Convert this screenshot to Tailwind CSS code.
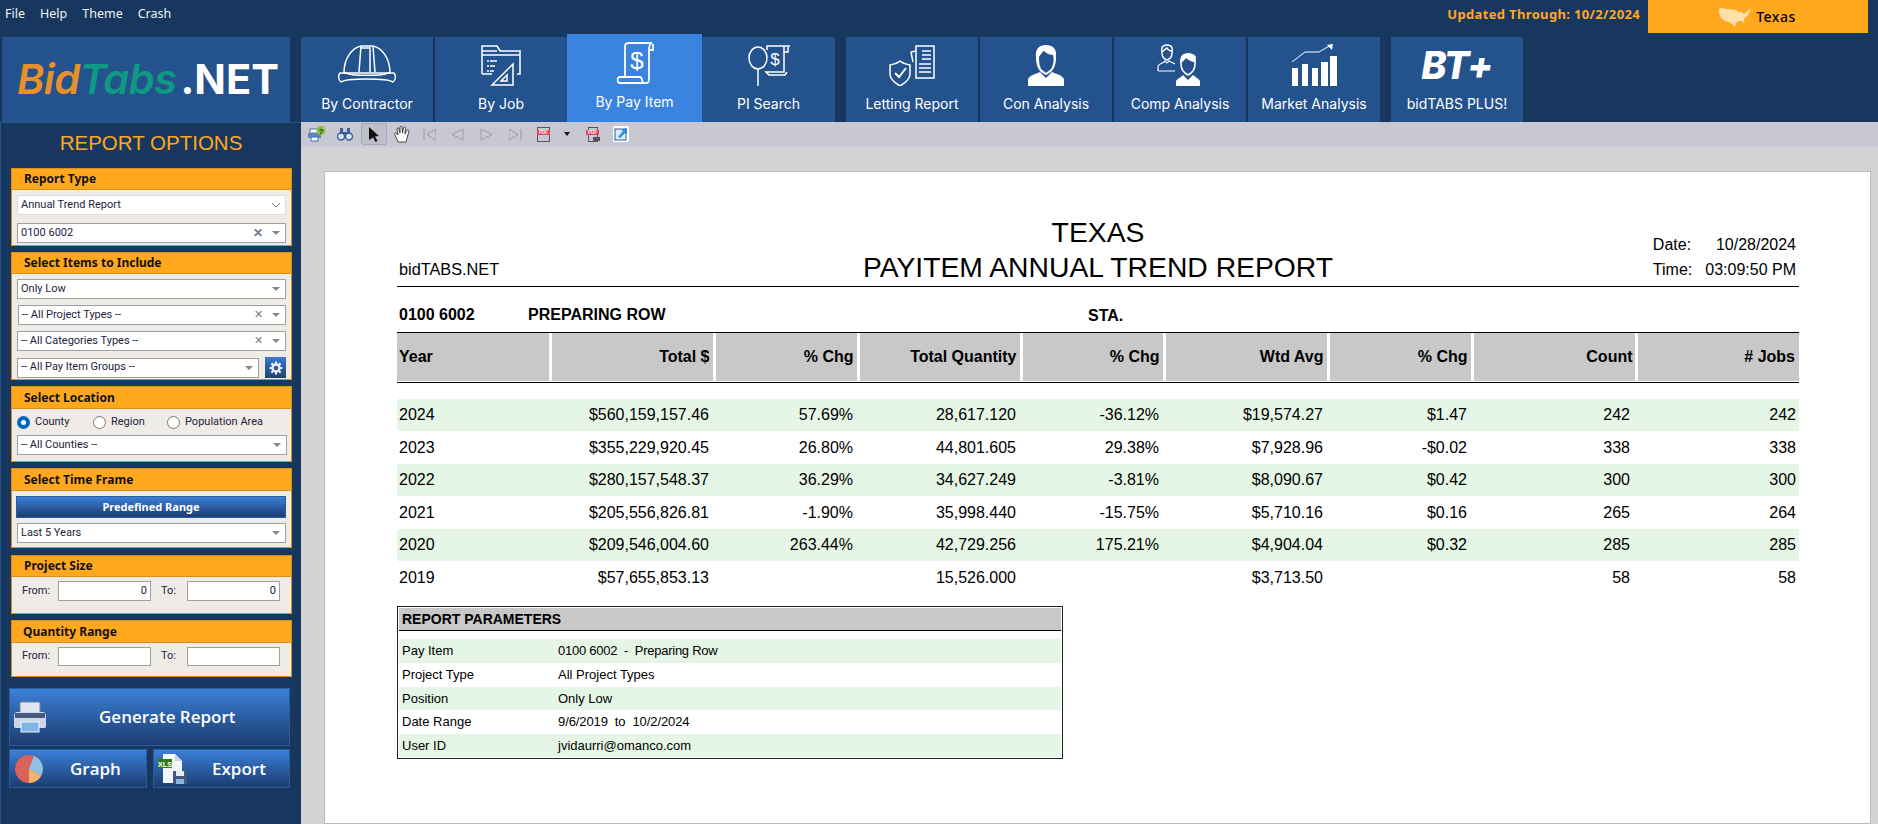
<!DOCTYPE html>
<html lang="en">
<head>
<meta charset="UTF-8">
<title>BidTabs.NET</title>
<script src="https://cdn.jsdelivr.net/npm/@tailwindcss/browser@4"></script>
</head>
<body class="h-screen overflow-hidden bg-[#17375e] font-['Noto_Sans',sans-serif]">

<!-- top menu -->
<div class="flex h-[34px] items-start text-white">
  <div class="flex gap-[15px] pl-[5px] pt-[5px] text-[12.500px] leading-[18px] text-[#f2f2f2]">
    <span>File</span><span>Help</span><span>Theme</span><span>Crash</span>
  </div>
  <div class="ml-auto pt-[5px] pr-[8px] text-[13px] leading-[18px] font-bold tracking-[0.35px] text-[#ffa81d]">Updated Through: 10/2/2024</div>
  <div class="mr-[10px] flex h-[33px] w-[220px] items-center justify-center gap-[5px] bg-[#ffa81d] pr-[1px]">
    <svg width="32" height="20" viewBox="0 0 32 20"><path d="M0 3 L1 1 L8 2 L17 3 L20 5 L23 5 L25 7 L30 3 L32 0 L31 5 L28 9 L25 12 L25.500 18 L23.500 14 L20 14 L17 16 L16 20 L13 17 L10 15 L6 14 L2 11 L0.500 7 Z" fill="#ffdfa8"/></svg>
    <span class="text-[14px] font-medium tracking-[0.5px] text-black">Texas</span>
  </div>
</div>

<!-- nav tiles -->
<div class="flex h-[88px] items-end pl-[2px] font-['Inter',sans-serif] text-[14px] text-white">
  <div class="flex h-[85px] w-[288px] items-center bg-[#23528d] pl-[15px]">
    <span class="text-[41.500px] leading-none font-semibold italic tracking-[-0.5px] text-[#e8912a]">Bid</span><span class="text-[41.500px] leading-none font-semibold italic tracking-[-0.5px] text-[#0e9a80]">Tabs</span>
    <span class="ml-[4px] text-[41.500px] leading-none font-bold text-white">.NET</span>
  </div>
  <div class="ml-[11px] flex h-[85px] w-[132px] flex-col items-center bg-[#23528d] pt-[7px]">
    <svg width="60" height="40" viewBox="0 0 60 40" fill="none" stroke="white" stroke-width="1.500"><path d="M7 29 C7 14 15 4 24 2 L36 2 C45 4 53 14 53 29"/><path d="M24 2 L22 28 M36 2 L38 28 M24 4 L33 4 L33 28 M7 29 L53 29"/><path d="M3 29 L10 29 C12 32 48 32 50 29 L57 29 C59 31 59 36 56 38 C50 34 10 34 4 38 C1 36 1 31 3 29 Z"/></svg>
    <span class="mt-[11px] leading-[18px]">By Contractor</span>
  </div>
  <div class="ml-[2px] flex h-[85px] w-[132px] flex-col items-center bg-[#23528d] pt-[7px]">
    <svg width="42" height="42" viewBox="0 0 42 42" fill="none" stroke="white" stroke-width="1.500"><path d="M2 30 L2 2 L17 2 L20 7 L40 7 L40 30 L37 30 M2 7 L17 7 M2 11 L40 11 M2 30 L12 30"/><path d="M7 17 L17 17 M7 22 L15 22 M7 27 L14 27" stroke-dasharray="2 1 8"/><path d="M33 20 L33 41 L12 41 Z M27 31 L27 37 L21 37 Z"/></svg>
    <span class="mt-[9px] leading-[18px]">By Job</span>
  </div>
  <div class="flex h-[88px] w-[135px] flex-col items-center bg-[#3a84e0] pt-[8px]">
    <svg width="38" height="42" viewBox="0 0 38 42" fill="none" stroke="white" stroke-width="1.800"><path d="M9 34 L9 4 C9 1 12 1 13 1 L36 1 C33 2 33 6 33 8 L33 38 C33 42 29 41 27 41 L4 41 C1 41 1 36 3 35 L24 35 C26 35 26 38 27 41 M33 8 L37 8 L37 2"/><text x="21" y="27" text-anchor="middle" font-family="Liberation Sans" font-size="24" fill="white" stroke="none">$</text></svg>
    <span class="mt-[9px] leading-[18px]">By Pay Item</span>
  </div>
  <div class="flex h-[85px] w-[133px] flex-col items-center bg-[#23528d] pt-[7px]">
    <svg width="44" height="42" viewBox="0 0 44 42" fill="none" stroke="white" stroke-width="1.500"><ellipse cx="11" cy="14" rx="9" ry="11"/><path d="M11 25 L11 42"/><path d="M20 6 L20 2 L43 2 M37 2 L37 28 L19 28 L22 31 L38 31 L40 28 M41 3 L41 8 L37 8"/><text x="28" y="21" text-anchor="middle" font-family="Liberation Sans" font-size="17" fill="white" stroke="none">$</text></svg>
    <span class="mt-[9px] leading-[18px]">PI Search</span>
  </div>
  <div class="ml-[11px] flex h-[85px] w-[132px] flex-col items-center bg-[#23528d] pt-[7px]">
    <svg width="46" height="42" viewBox="0 0 46 42" fill="none" stroke="white" stroke-width="1.500"><path d="M1 21 C6 20 9 19 11 17 C13 19 16 20 21 21 L21 30 C21 35 16 39 11 42 C6 39 1 35 1 30 Z"/><path d="M6 29 L10 33 L17 24" stroke-width="2"/><path d="M24 18 L22 8 L27 7"/><path d="M27 2 L45 2 L45 34 L27 34 Z" fill="#23528d"/><path d="M33 7 L42 7 M33 11 L42 11 M33 15 L42 15 M30 20 L42 20 M30 24 L42 24 M30 28 L42 28" stroke-width="1.300"/></svg>
    <span class="mt-[9px] leading-[18px]">Letting Report</span>
  </div>
  <div class="ml-[2px] flex h-[85px] w-[132px] flex-col items-center bg-[#23528d] pt-[7px]">
    <svg width="38" height="42" viewBox="0 0 38 42" fill="white"><path d="M19 1 C11 1 8 6 9 14 C9 20 11 25 14 28 L19 31 L24 28 C27 25 29 20 29 14 C30 6 27 1 19 1 Z"/><path d="M12 13 C14 10 16 7 17 7 C20 10 24 11 26 11 C27 15 27 20 24 25 L19 29 L14 25 C12 21 12 16 12 13 Z" fill="#23528d"/><path d="M1 42 L1 35 C3 31 9 30 13 28 L19 34 L25 28 C29 30 35 31 37 35 L37 42 Z"/></svg>
    <span class="mt-[9px] leading-[18px]">Con Analysis</span>
  </div>
  <div class="ml-[2px] flex h-[85px] w-[132px] flex-col items-center bg-[#23528d] pt-[7px]">
    <svg width="46" height="42" viewBox="0 0 46 42" fill="none" stroke="white"><path d="M10 1 C5 1 4 4 5 9 C5 12 7 15 10 16 C13 15 15 12 15 9 C16 4 15 1 10 1 Z M5 8 C8 6 9 4 10 4 C11 6 13 7 15 7" stroke-width="1.500"/><path d="M1 27 L1 22 C3 19 7 19 8 17 L10 19 L12 17 L18 20 M1 27 L18 27" stroke-width="1.200"/><path d="M31 10 C26 10 23 13 24 20 C24 25 27 29 31 31 C35 29 38 25 38 20 C39 13 36 10 31 10 Z" stroke-width="1.500"/><path d="M24 19 C26 17 28 16 29 14 C31 16 35 18 38 18 L39 13 C37 8 26 8 24 13 Z" fill="white" stroke="none"/><path d="M19 42 L19 37 C21 34 25 33 26 31 L31 36 L36 31 C38 33 41 34 43 37 L43 42 Z" fill="white" stroke="none"/></svg>
    <span class="mt-[9px] leading-[18px]">Comp Analysis</span>
  </div>
  <div class="ml-[2px] flex h-[85px] w-[132px] flex-col items-center bg-[#23528d] pt-[7px]">
    <svg width="46" height="42" viewBox="0 0 46 42" fill="white"><path d="M1 18 L14 8 L28 8 L40 1" fill="none" stroke="white" stroke-width="1"/><path d="M36 1 L42 0 L41 6 Z"/><rect x="1" y="24" width="6" height="18"/><rect x="11" y="20" width="6" height="22"/><rect x="21" y="24" width="6" height="18"/><rect x="30" y="18" width="7" height="24"/><rect x="39" y="12" width="7" height="30"/></svg>
    <span class="mt-[9px] leading-[18px]">Market Analysis</span>
  </div>
  <div class="ml-[11px] flex h-[85px] w-[132px] flex-col items-center bg-[#23528d] pt-[7px]">
    <span class="h-[42px] text-[38px] leading-[42px] font-extrabold italic tracking-[-0.5px]">BT+</span>
    <span class="mt-[9px] leading-[18px]">bidTABS PLUS!</span>
  </div>
</div>

<div class="flex h-[702px]">
  <!-- sidebar -->
  <div class="w-[301px] shrink-0 border-t border-l border-[#23528d] font-['Roboto',sans-serif] text-[11px] text-[#1c2340]">
    <div class="h-[45px] pt-[6px] text-center font-['Liberation_Sans',sans-serif] text-[20.500px] leading-[28px] text-[#ffa81d]">REPORT OPTIONS</div>

    <div class="ml-[10px] h-[78px] w-[281px] border border-[#d9901a] bg-[#efebe6]">
      <div class="h-[21px] border-b border-[#d9901a] bg-[#ffa81d] pl-[12px] font-['Noto_Sans',sans-serif] text-[12px] leading-[20px] font-bold text-[#111]">Report Type</div>
      <div class="mx-[5px] mt-[5px] flex h-[20px] items-center justify-between rounded-[2px] border border-[#ddd] bg-white pr-[4px] pl-[3px]">Annual Trend Report
        <svg width="10" height="6" viewBox="0 0 10 6" fill="none" stroke="#777"><path d="M1 1 L5 5 L9 1"/></svg>
      </div>
      <div class="mx-[5px] mt-[8px] flex h-[20px] items-center border border-[#a0a0a0] bg-white pr-[5px] pl-[3px]">0100 6002
        <span class="ml-auto text-[12px] font-bold text-[#6d7a88]">✕</span><span class="ml-[9px] h-0 w-0 border-x-[4px] border-t-[4px] border-x-transparent border-t-[#888]"></span>
      </div>
    </div>

    <div class="mt-[6px] ml-[10px] h-[128px] w-[281px] border border-[#d9901a] bg-[#efebe6]">
      <div class="h-[21px] border-b border-[#d9901a] bg-[#ffa81d] pl-[12px] font-['Noto_Sans',sans-serif] text-[12px] leading-[20px] font-bold text-[#111]">Select Items to Include</div>
      <div class="mx-[5px] mt-[5px] flex h-[20px] items-center border border-[#a0a0a0] bg-white pr-[5px] pl-[3px]">Only Low
        <span class="ml-auto h-0 w-0 border-x-[4px] border-t-[4px] border-x-transparent border-t-[#888]"></span>
      </div>
      <div class="mt-[6px] mr-[5px] ml-[6px] flex h-[20px] items-center border border-[#a0a0a0] bg-white pr-[5px] pl-[3px]">-- All Project Types --
        <span class="ml-auto text-[11px] text-[#777]">✕</span><span class="ml-[9px] h-0 w-0 border-x-[4px] border-t-[4px] border-x-transparent border-t-[#888]"></span>
      </div>
      <div class="mx-[5px] mt-[6px] flex h-[20px] items-center border border-[#a0a0a0] bg-white pr-[5px] pl-[3px]">-- All Categories Types --
        <span class="ml-auto text-[11px] text-[#777]">✕</span><span class="ml-[9px] h-0 w-0 border-x-[4px] border-t-[4px] border-x-transparent border-t-[#888]"></span>
      </div>
      <div class="mx-[5px] mt-[6px] flex items-center justify-between">
        <div class="flex h-[20px] w-[242px] items-center border border-[#a0a0a0] bg-white pr-[5px] pl-[3px]">-- All Pay Item Groups --
          <span class="ml-auto h-0 w-0 border-x-[4px] border-t-[4px] border-x-transparent border-t-[#888]"></span>
        </div>
        <div class="flex h-[21px] w-[21px] items-center justify-center bg-gradient-to-b from-[#3a7bd0] to-[#1d4273]">
          <svg width="14" height="14" viewBox="0 0 14 14"><circle cx="7" cy="7" r="3.500" fill="none" stroke="#e8eef6" stroke-width="2.400"/><path d="M7 0.500 V3 M7 11 V13.500 M0.500 7 H3 M11 7 H13.500 M2.400 2.400 L4.200 4.200 M9.800 9.800 L11.600 11.600 M2.400 11.600 L4.200 9.800 M9.800 4.200 L11.600 2.400" stroke="#e8eef6" stroke-width="2.200"/></svg>
        </div>
      </div>
    </div>

    <div class="mt-[6px] ml-[10px] h-[76px] w-[281px] border border-[#d9901a] bg-[#efebe6]">
      <div class="h-[22px] border-b border-[#d9901a] bg-[#ffa81d] pl-[12px] font-['Noto_Sans',sans-serif] text-[12px] leading-[21px] font-bold text-[#111]">Select Location</div>
      <div class="flex h-[26px] items-center pl-[5px]">
        <span class="h-[13px] w-[13px] rounded-full border-[4px] border-[#0067c0] bg-white"></span><span class="ml-[5px] w-[58px]">County</span>
        <span class="h-[13px] w-[13px] rounded-full border border-[#777] bg-white"></span><span class="ml-[5px] w-[56px]">Region</span>
        <span class="h-[13px] w-[13px] rounded-full border border-[#777] bg-white"></span><span class="ml-[5px]">Population Area</span>
      </div>
      <div class="mr-[4px] ml-[5px] flex h-[20px] items-center border border-[#a0a0a0] bg-white pr-[5px] pl-[3px]">-- All Counties --
        <span class="ml-auto h-0 w-0 border-x-[4px] border-t-[4px] border-x-transparent border-t-[#888]"></span>
      </div>
    </div>

    <div class="mt-[6px] ml-[10px] h-[80px] w-[281px] border border-[#d9901a] bg-[#efebe6]">
      <div class="h-[22px] border-b border-[#d9901a] bg-[#ffa81d] pl-[12px] font-['Noto_Sans',sans-serif] text-[12px] leading-[21px] font-bold text-[#111]">Select Time Frame</div>
      <div class="mt-[5px] mr-[5px] ml-[4px] h-[22px] border border-[#2a5da0] bg-gradient-to-b from-[#3b80d9] to-[#1c3d70] text-center font-['Noto_Sans',sans-serif] text-[11px] leading-[20px] font-bold text-white">Predefined Range</div>
      <div class="mx-[5px] mt-[5px] flex h-[20px] items-center border border-[#a0a0a0] bg-white pr-[5px] pl-[3px]">Last 5 Years
        <span class="ml-auto h-0 w-0 border-x-[4px] border-t-[4px] border-x-transparent border-t-[#888]"></span>
      </div>
    </div>

    <div class="mt-[7px] ml-[10px] h-[59px] w-[281px] border border-[#d9901a] bg-[#efebe6]">
      <div class="h-[21px] border-b border-[#d9901a] bg-[#ffa81d] pl-[12px] font-['Noto_Sans',sans-serif] text-[12px] leading-[20px] font-bold text-[#111]">Project Size</div>
      <div class="mt-[4px] flex items-center pl-[10px]">
        <span class="w-[36px]">From:</span><div class="h-[20px] w-[93px] border border-[#a0a0a0] bg-white pr-[3px] text-right leading-[18px]">0</div>
        <span class="ml-[10px] w-[26px]">To:</span><div class="h-[20px] w-[93px] border border-[#a0a0a0] bg-white pr-[3px] text-right leading-[18px]">0</div>
      </div>
    </div>

    <div class="mt-[6px] ml-[10px] h-[57px] w-[281px] border border-[#d9901a] bg-[#efebe6]">
      <div class="h-[22px] border-b border-[#d9901a] bg-[#ffa81d] pl-[11px] font-['Noto_Sans',sans-serif] text-[12px] leading-[21px] font-bold text-[#111]">Quantity Range</div>
      <div class="mt-[4px] flex items-center pl-[10px]">
        <span class="w-[36px]">From:</span><div class="h-[19px] w-[93px] border border-[#a0a0a0] bg-white"></div>
        <span class="ml-[10px] w-[26px]">To:</span><div class="h-[19px] w-[93px] border border-[#a0a0a0] bg-white"></div>
      </div>
    </div>

    <div class="mt-[11px] ml-[8px] flex h-[58px] w-[281px] items-center border border-[#2a5da0] bg-gradient-to-b from-[#3b80d9] to-[#1c3d70] pl-[4px] font-['Open_Sans',sans-serif] font-semibold text-white">
      <svg width="32" height="32" viewBox="0 0 32 32"><rect x="6" y="1" width="20" height="11" fill="#dfe6f2" stroke="#6f83a8"/><path d="M3 11 H29 C31 11 32 13 32 15 V25 C32 27 31 27 29 27 H3 C1 27 0 27 0 25 V15 C0 13 1 11 3 11 Z" fill="#cdd6e6"/><rect x="1" y="12" width="30" height="5" fill="#475a82"/><rect x="7" y="21" width="18" height="10" fill="#7fb6e6" stroke="#eef3fa"/></svg>
      <span class="ml-[53px] text-[17px]">Generate Report</span>
    </div>
    <div class="mt-[3px] ml-[8px] flex w-[281px] justify-between font-['Open_Sans',sans-serif] text-[17px] font-semibold text-white">
      <div class="flex h-[39px] w-[138px] items-center border border-[#2a5da0] bg-gradient-to-b from-[#3b80d9] to-[#1c3d70] pl-[5px]">
        <svg width="28" height="28" viewBox="0 0 28 28"><circle cx="14" cy="14" r="14" fill="#d9635a"/><path d="M14 14 L19 1 A14 14 0 0 1 26 21 Z" fill="#8fc1e6"/><path d="M14 14 L26 21 A14 14 0 0 1 14 28 Z" fill="#f1b46a"/></svg>
        <span class="ml-[27px]">Graph</span>
      </div>
      <div class="flex h-[39px] w-[137px] items-center border border-[#2a5da0] bg-gradient-to-b from-[#3b80d9] to-[#1c3d70] pl-[4px]">
        <svg width="30" height="30" viewBox="0 0 30 30"><path d="M5 0 H17 L24 7 V29 H5 Z" fill="#f3f6fb"/><path d="M17 0 V7 H24" fill="#cdd6e6"/><rect x="0" y="5" width="14" height="9" fill="#2d7d17"/><text x="7" y="12.500" text-anchor="middle" font-family="Liberation Sans" font-size="7.500" font-weight="700" fill="white">XLS</text><rect x="15" y="17" width="14" height="13" fill="#44587e"/><rect x="18" y="17" width="8" height="5" fill="#e6ebf4"/><rect x="18" y="25" width="8" height="5" fill="#86b8e4"/></svg>
        <span class="ml-[24px]">Export</span>
      </div>
    </div>
  </div>

  <div class="flex min-w-0 flex-1 flex-col bg-[#d3d3d3]">
    <!-- viewer toolbar -->
    <div class="flex h-[25px] items-center bg-[#c8c8d2] pl-[7px]">
      <svg class="mr-[11px]" width="18" height="16" viewBox="0 0 18 16"><rect x="2" y="3" width="8" height="4" fill="#fff" stroke="#4a6ea8"/><rect x="0" y="7" width="13" height="5" fill="#5f86c0"/><rect x="3" y="11" width="7" height="4" fill="#fff" stroke="#4a6ea8"/><circle cx="13" cy="4.500" r="4.500" fill="#86c232"/><text x="13" y="7.500" text-anchor="middle" font-family="Liberation Sans" font-size="8" font-weight="700" fill="#234">?</text></svg>
      <svg class="mr-[8px]" width="16" height="14" viewBox="0 0 16 14"><circle cx="4" cy="9.500" r="3.500" fill="#dbe6f5" stroke="#3f5f9a" stroke-width="1.500"/><circle cx="12" cy="9.500" r="3.500" fill="#dbe6f5" stroke="#3f5f9a" stroke-width="1.500"/><rect x="3" y="1" width="3" height="6" fill="#3f5f9a"/><rect x="10" y="1" width="3" height="6" fill="#3f5f9a"/><rect x="6" y="5" width="4" height="3" fill="#3f5f9a"/></svg>
      <div class="mr-[7px] flex h-[22px] w-[26px] items-center justify-center rounded-[2px] border border-[#a9aab8] bg-[#bebfca]">
        <svg width="11" height="15" viewBox="0 0 11 15"><path d="M0 0 L10 9 L6 9.500 L8.500 14 L6.500 15 L4 10.500 L0 13 Z" fill="#111"/></svg>
      </div>
      <svg class="mr-[13px]" width="16" height="17" viewBox="0 0 16 17"><path d="M4 16 L1 9 C0 7 2 6 3 8 L4 9 L3 3 C3 1.500 5 1.500 5 3 L6 7 L6 1.500 C6 0 8 0 8 1.500 L8.500 7 L9.500 2 C10 0.500 11.500 1 11.500 2.500 L11 8 L13 4 C14 3 15 4 15 5 L13 12 L12 16 Z" fill="#fff" stroke="#222" stroke-width="0.800"/></svg>
      <svg class="mr-[15px]" width="13" height="13" viewBox="0 0 13 13" fill="#c9cad2" stroke="#9a9a9e"><path d="M1 1 V12 M13 1 L4 6.500 L13 12 Z"/></svg>
      <svg class="mr-[16px]" width="13" height="13" viewBox="0 0 13 13" fill="#c9cad2" stroke="#9a9a9e"><path d="M12 1 L1 6.500 L12 12 Z"/></svg>
      <svg class="mr-[16px]" width="13" height="13" viewBox="0 0 13 13" fill="#c9cad2" stroke="#9a9a9e"><path d="M1 1 L12 6.500 L1 12 Z"/></svg>
      <svg class="mr-[15px]" width="13" height="13" viewBox="0 0 13 13" fill="#c9cad2" stroke="#9a9a9e"><path d="M12 1 V12 M0 1 L9 6.500 L0 12 Z"/></svg>
      <svg class="mr-[14px]" width="13" height="15" viewBox="0 0 13 15"><rect x="0.500" y="0.500" width="12" height="14" fill="none" stroke="#555"/><rect x="0" y="3" width="13" height="5" fill="#e8425a"/><text x="6.500" y="7.300" text-anchor="middle" font-family="Liberation Sans" font-size="4.500" font-weight="700" fill="white">PDF</text></svg>
      <span class="mr-[16px] h-0 w-0 border-x-[3.500px] border-t-[4px] border-x-transparent border-t-[#111]"></span>
      <svg class="mr-[13px]" width="14" height="15" viewBox="0 0 14 15"><rect x="2.500" y="0.500" width="9" height="14" fill="none" stroke="#555"/><rect x="0" y="3" width="13" height="5" fill="#e8425a"/><text x="6.500" y="7.300" text-anchor="middle" font-family="Liberation Sans" font-size="4.500" font-weight="700" fill="white">PDF</text><rect x="7" y="10" width="7" height="4" fill="#555"/></svg>
      <svg width="16" height="16" viewBox="0 0 16 16"><rect width="16" height="16" rx="2" fill="#fff"/><rect x="2" y="3" width="11" height="11" fill="#dfe9f5" stroke="#2e5a9e"/><path d="M5 11 L10 5 L8 4 L14 2 L14 8 L12 7 L7 12 Z" fill="#2b8fe0"/></svg>
    </div>

    <!-- report page -->
    <div class="mt-[24px] ml-[23px] h-[660px] w-[1547px] border border-[#bcbcbc] bg-white pt-[43px] pl-[72px] font-['Liberation_Sans',sans-serif] text-black">
      <div class="grid w-[1402px] grid-cols-[1fr_auto_1fr] border-b border-black pb-[1px]">
        <div class="self-end pb-[4px] pl-[2px] text-[16.300px] leading-[24px]">bidTABS.NET</div>
        <div class="text-center text-[28.300px] leading-[35px]"><div>TEXAS</div><div>PAYITEM ANNUAL TREND REPORT</div></div>
        <div class="grid grid-cols-[auto_auto] justify-end gap-x-[13px] self-start pt-[17px] pr-[3px] text-[16px] leading-[25px]">
          <span>Date:</span><span class="text-right">10/28/2024</span>
          <span>Time:</span><span class="text-right">03:09:50 PM</span>
        </div>
      </div>

      <div class="flex h-[45px] items-center pt-[11px] text-[16px] font-bold">
        <span class="w-[131px] pl-[2px]">0100 6002</span><span class="w-[560px]">PREPARING ROW</span><span class="pt-[2px]">STA.</span>
      </div>

      <table class="w-[1402px] table-fixed border-collapse text-right text-[16px]">
        <colgroup>
          <col class="w-[153px]"><col class="w-[164px]"><col class="w-[144px]"><col class="w-[163px]"><col class="w-[143px]"><col class="w-[164px]"><col class="w-[144px]"><col class="w-[164px]"><col class="w-[163px]">
        </colgroup>
        <thead class="border-y border-black font-bold">
          <tr class="h-[1px]"><td colspan="9" class="p-0"></td></tr>
          <tr class="h-[48px] bg-[#c8c8c8]">
            <th class="border-r-[3px] border-white pl-[2px] text-left">Year</th>
            <th class="border-r-[3px] border-white pr-[3px]">Total $</th>
            <th class="border-r-[3px] border-white pr-[3px]">% Chg</th>
            <th class="border-r-[3px] border-white pr-[3px]">Total Quantity</th>
            <th class="border-r-[3px] border-white pr-[3px]">% Chg</th>
            <th class="border-r-[3px] border-white pr-[3px]">Wtd Avg</th>
            <th class="border-r-[3px] border-white pr-[3px]">% Chg</th>
            <th class="border-r-[3px] border-white pr-[2px]">Count</th>
            <th class="pr-[4px]"># Jobs</th>
          </tr>
          <tr class="h-[1px]"><td colspan="9" class="p-0"></td></tr>
        </thead>
        <tbody>
          <tr class="h-[17px]"><td colspan="9"></td></tr>
          <tr class="h-[32px] bg-[#e6f6e6]"><td class="pl-[2px] text-left">2024</td><td class="pr-[5px]">$560,159,157.46</td><td class="pr-[5px]">57.69%</td><td class="pr-[5px]">28,617.120</td><td class="pr-[5px]">-36.12%</td><td class="pr-[5px]">$19,574.27</td><td class="pr-[5px]">$1.47</td><td class="pr-[6px]">242</td><td class="pr-[3px]">242</td></tr>
          <tr class="h-[33px]"><td class="pl-[2px] text-left">2023</td><td class="pr-[5px]">$355,229,920.45</td><td class="pr-[5px]">26.80%</td><td class="pr-[5px]">44,801.605</td><td class="pr-[5px]">29.38%</td><td class="pr-[5px]">$7,928.96</td><td class="pr-[5px]">-$0.02</td><td class="pr-[6px]">338</td><td class="pr-[3px]">338</td></tr>
          <tr class="h-[32px] bg-[#e6f6e6]"><td class="pl-[2px] text-left">2022</td><td class="pr-[5px]">$280,157,548.37</td><td class="pr-[5px]">36.29%</td><td class="pr-[5px]">34,627.249</td><td class="pr-[5px]">-3.81%</td><td class="pr-[5px]">$8,090.67</td><td class="pr-[5px]">$0.42</td><td class="pr-[6px]">300</td><td class="pr-[3px]">300</td></tr>
          <tr class="h-[33px]"><td class="pl-[2px] text-left">2021</td><td class="pr-[5px]">$205,556,826.81</td><td class="pr-[5px]">-1.90%</td><td class="pr-[5px]">35,998.440</td><td class="pr-[5px]">-15.75%</td><td class="pr-[5px]">$5,710.16</td><td class="pr-[5px]">$0.16</td><td class="pr-[6px]">265</td><td class="pr-[3px]">264</td></tr>
          <tr class="h-[32px] bg-[#e6f6e6]"><td class="pl-[2px] text-left">2020</td><td class="pr-[5px]">$209,546,004.60</td><td class="pr-[5px]">263.44%</td><td class="pr-[5px]">42,729.256</td><td class="pr-[5px]">175.21%</td><td class="pr-[5px]">$4,904.04</td><td class="pr-[5px]">$0.32</td><td class="pr-[6px]">285</td><td class="pr-[3px]">285</td></tr>
          <tr class="h-[33px]"><td class="pl-[2px] text-left">2019</td><td class="pr-[5px]">$57,655,853.13</td><td class="pr-[5px]"></td><td class="pr-[5px]">15,526.000</td><td class="pr-[5px]"></td><td class="pr-[5px]">$3,713.50</td><td class="pr-[5px]"></td><td class="pr-[6px]">58</td><td class="pr-[3px]">58</td></tr>
        </tbody>
      </table>

      <div class="mt-[12px] w-[666px] border border-[#222] p-[1px] text-[13px]">
        <div class="h-[23px] border-b border-black bg-[#c8c8c8] pl-[3px] text-[14px] leading-[22px] font-bold">REPORT PARAMETERS</div>
        <div class="pt-[8px]">
          <div class="flex h-[24px] items-center bg-[#e6f6e6] pl-[3px]"><span class="w-[156px]">Pay Item</span><span class="tracking-[-0.25px]">0100 6002&nbsp; -&nbsp; Preparing Row</span></div>
          <div class="flex h-[24px] items-center pl-[3px]"><span class="w-[156px]">Project Type</span><span>All Project Types</span></div>
          <div class="flex h-[23px] items-center bg-[#e6f6e6] pl-[3px]"><span class="w-[156px]">Position</span><span>Only Low</span></div>
          <div class="flex h-[24px] items-center pl-[3px]"><span class="w-[156px]">Date Range</span><span class="tracking-[-0.1px]">9/6/2019&nbsp; to&nbsp; 10/2/2024</span></div>
          <div class="flex h-[23px] items-center bg-[#e6f6e6] pl-[3px]"><span class="w-[156px]">User ID</span><span>jvidaurri@omanco.com</span></div>
        </div>
      </div>
    </div>
  </div>
</div>
</body>
</html>
